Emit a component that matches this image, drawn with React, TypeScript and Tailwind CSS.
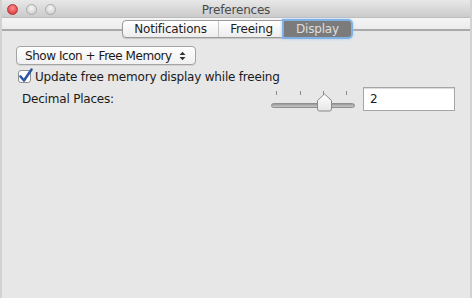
import React from "react";

export default function App() {
  return (
    <div
      className="w-[472px] h-[298px] overflow-hidden bg-[#e7e7e7] flex flex-col border-l-2 border-r-2 border-[#d2d2d2]"
      style={{ fontFamily: '"DejaVu Sans", "Liberation Sans", sans-serif' }}
    >
      {/* Title bar + toolbar */}
      <div className="relative h-[31px] shrink-0">
        <div className="h-[17px] bg-gradient-to-b from-[#e8e8e8] to-[#cbcbcb] flex items-center relative">
          <div className="flex items-center gap-[8px] pl-[5px] mt-[2px]">
            <div className="w-[11px] h-[11px] rounded-full bg-[radial-gradient(circle_at_50%_35%,#ff9090,#d6262c)] border border-[#b03a3a]" />
            <div className="w-[11px] h-[11px] rounded-full bg-[radial-gradient(circle_at_50%_35%,#f6f6f6,#c8c8c8)] border border-[#aaaaaa]" />
            <div className="w-[11px] h-[11px] rounded-full bg-[radial-gradient(circle_at_50%_35%,#f6f6f6,#c8c8c8)] border border-[#aaaaaa]" />
          </div>
          <div className="absolute inset-0 flex items-center justify-center text-[12px] tracking-[-0.2px] text-[#4a4a4a] leading-none pt-[2px]">
            Preferences
          </div>
        </div>
        <div className="h-[14px] bg-gradient-to-b from-[#f4f4f4] to-[#ececec] border-t border-[#bcbcbc] border-b-2 border-b-[#a9a9a9]" />
        <div className="absolute left-[120px] top-[20px] flex h-[18px] rounded-[4px] border border-[#9a9a9a] bg-gradient-to-b from-[#ffffff] to-[#ededed] text-[12px] tracking-[-0.2px] text-[#1e1e1e] leading-none shadow-[0_1px_1px_rgba(0,0,0,0.15)]">
          <div className="w-[96px] flex items-center justify-center border-r border-[#c4c4c4]">Notifications</div>
          <div className="w-[65px] flex items-center justify-center">Freeing</div>
          <div className="w-[67px] flex items-center justify-center bg-[#7b7b7b] text-[#dedede] rounded-r-[3px] shadow-[0_0_0_2px_#80b1e6,0_0_3px_2px_#a9cdf2]">Display</div>
        </div>
      </div>

      {/* Content */}
      <div className="flex flex-col pl-[14px] pr-[15px] pt-[15px] text-[12px] tracking-[-0.2px] text-[#1a1a1a]">
        <div className="flex">
          <div className="h-[19px] w-[180px] flex items-center justify-between pl-[8px] pr-[9px] rounded-[4px] border border-[#a4a4a4] bg-gradient-to-b from-[#ffffff] to-[#f0f0f0] shadow-[0_1px_0_rgba(0,0,0,0.08)] leading-none">
            <span className="tracking-[-0.45px]">Show Icon + Free Memory</span>
            <svg width="7" height="10" viewBox="0 0 7 10">
              <path d="M0.5 4 L3.5 0.8 L6.5 4 Z" fill="#333" />
              <path d="M0.5 6 L3.5 9.2 L6.5 6 Z" fill="#333" />
            </svg>
          </div>
        </div>
        <div className="flex items-center mt-[4px] h-[15px]">
          <div className="w-[13px] h-[13px] ml-[2px] rounded-[3px] border border-[#8f8f8f] bg-white relative shrink-0">
            <svg width="16" height="16" viewBox="0 0 16 16" className="absolute left-[-1px] top-[-3px]">
              <path d="M2.5 8.5 L6 12.5 L13.5 1.5" stroke="#2c58a6" strokeWidth="2.6" fill="none" strokeLinecap="round" strokeLinejoin="round" />
            </svg>
          </div>
          <span className="ml-[4px] leading-none">Update free memory display while freeing</span>
        </div>
        <div className="flex items-start mt-[4px] h-[26px]">
          <span className="ml-[6px] leading-none mt-[5px]">Decimal Places:</span>
          <div className="ml-auto flex items-start">
            <div className="relative w-[84px] h-[26px] mr-[8px]">
              {[5, 29, 52, 75].map((x) => (
                <div key={x} className="absolute top-[3px] w-[1px] h-[4px] bg-[#8a8a8a]" style={{ left: x }} />
              ))}
              <div className="absolute left-0 right-0 top-[15px] h-[5px] rounded-full bg-gradient-to-b from-[#9a9a9a] to-[#c8c8c8] border border-[#8e8e8e]" />
              <svg width="17" height="19" viewBox="0 0 17 19" className="absolute left-[45px] top-[5px]">
                <defs>
                  <linearGradient id="kg" x1="0" x2="0" y1="0" y2="1">
                    <stop offset="0" stopColor="#ffffff" />
                    <stop offset="1" stopColor="#e6e6e6" />
                  </linearGradient>
                </defs>
                <path d="M8.5 1 L15.5 7.5 L15.5 16 Q15.5 18 13.5 18 L3.5 18 Q1.5 18 1.5 16 L1.5 7.5 Z" fill="url(#kg)" stroke="#8a8a8a" strokeWidth="1" />
              </svg>
            </div>
            <div className="w-[92px] h-[24px] mt-[-1px] bg-white border border-[#a6a6a6] shadow-[inset_0_1px_1px_rgba(0,0,0,0.15)] flex items-center pl-[6px] leading-none">
              2
            </div>
          </div>
        </div>
      </div>
    </div>
  );
}
